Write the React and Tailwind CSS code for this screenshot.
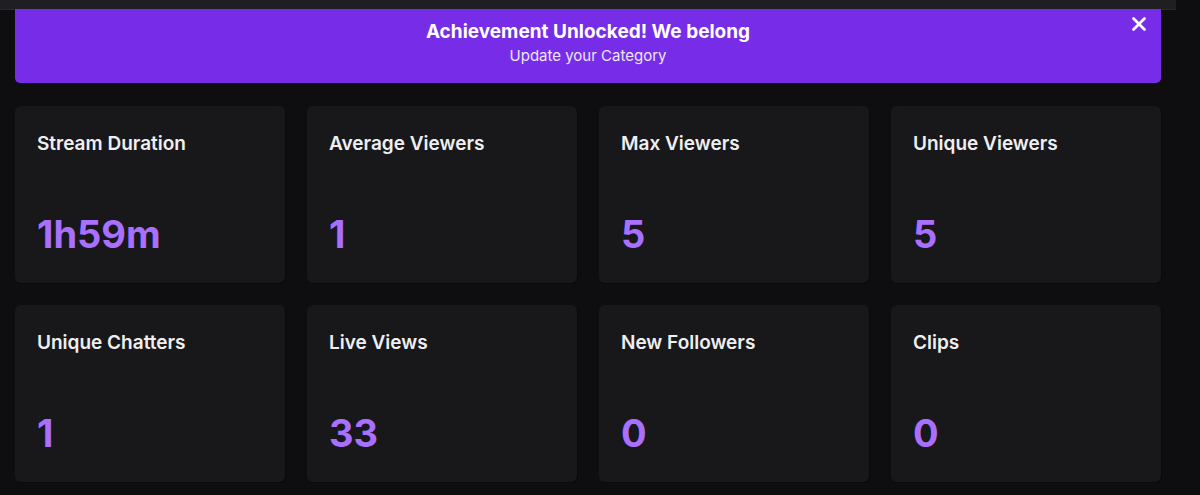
import { X } from 'lucide-react';

const stats = [
    { label: 'Stream Duration', value: '1h59m' },
    { label: 'Average Viewers', value: '1' },
    { label: 'Max Viewers', value: '5' },
    { label: 'Unique Viewers', value: '5' },
    { label: 'Unique Chatters', value: '1' },
    { label: 'Live Views', value: '33' },
    { label: 'New Followers', value: '0' },
    { label: 'Clips', value: '0' },
];

function StatCard({ label, value }) {
    return (
        <div className="h-[177px] rounded-md bg-[#18181b] px-[22px] pt-[26px] shadow-[1px_1px_0_#0a0a0c]">
            <div className="text-[19px] leading-[24px] font-semibold text-[#efeff1]">
                {label}
            </div>
            <div className="mt-[54px] text-[38px] leading-[48px] font-bold text-[#a970ff]">
                {value}
            </div>
        </div>
    );
}

export default function App() {
    return (
        <div className="w-[1200px] h-[495px] overflow-hidden bg-[#0e0e10] font-['Inter',sans-serif]">
            <div className="h-[10px] w-[1176px] bg-[#1f1f23] border-b border-[#2a2a2e]" />
            <div className="px-[15px] w-[1176px]">
                <div className="relative -mt-px h-[74px] w-[1146px] rounded-b-[5px] bg-[#772ce8] flex flex-col items-center pt-[11px]">
                    <div className="text-[19px] leading-[24px] font-bold text-white">
                        Achievement Unlocked! We belong
                    </div>
                    <div className="mt-[2px] text-[15px] leading-[20px] text-[#eee6fd]">
                        Update your Category
                    </div>
                    <button className="absolute right-[11px] top-[4px] text-white">
                        <X size={22} strokeWidth={3} />
                    </button>
                </div>
                <div className="mt-[23px] grid grid-cols-4 gap-x-[22px] gap-y-[22px]">
                    {stats.map((s) => (
                        <StatCard key={s.label} label={s.label} value={s.value} />
                    ))}
                </div>
            </div>
        </div>
    );
}
